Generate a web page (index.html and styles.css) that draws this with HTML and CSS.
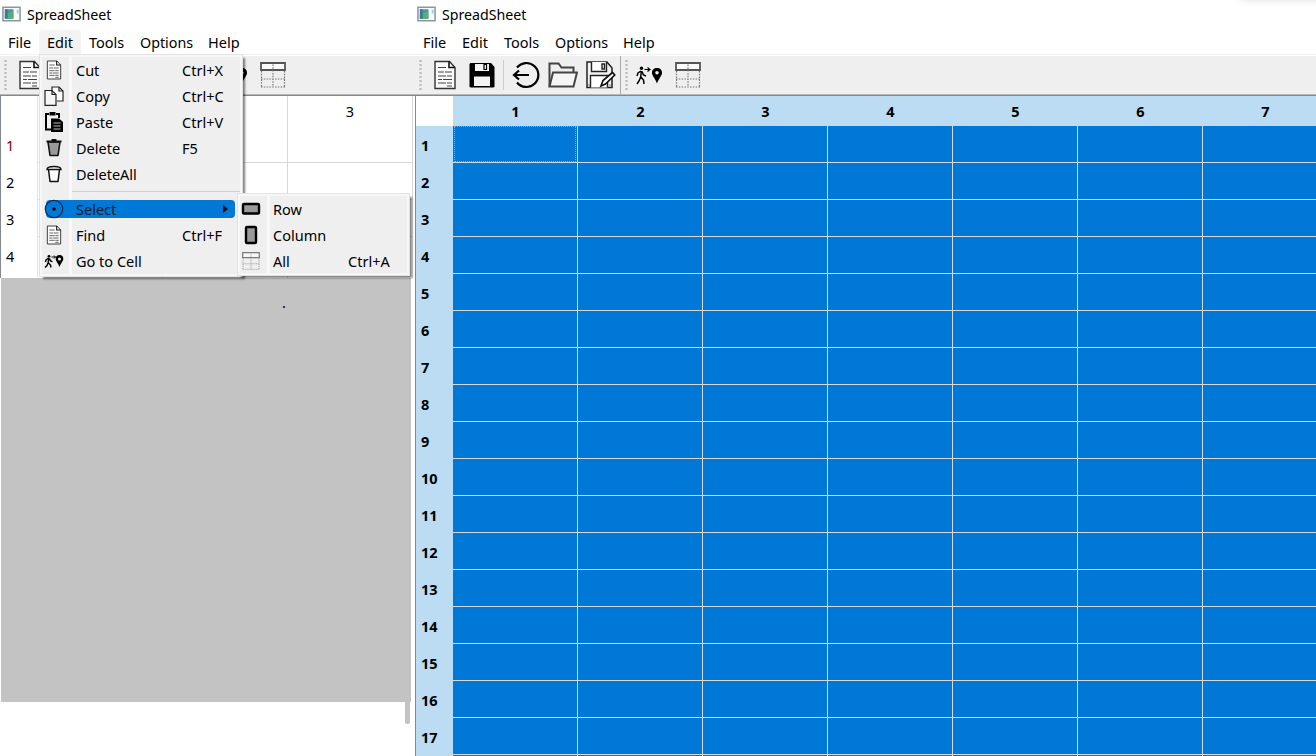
FILE: index.html
```html
<!DOCTYPE html>
<html lang="en">
<head>
<meta charset="utf-8">
<title>SpreadSheet</title>
<link rel="stylesheet" href="styles.css">
</head>
<body>
<svg class="sprite" aria-hidden="true">
  <symbol id="doc" viewBox="0 0 24 30"><path d="M2 1.500h14.500l5.500 6v21H2z" fill="#fafafa" stroke="#333" stroke-width="1.400"/><path d="M16 1.500v6h6" fill="none" stroke="#111" stroke-width="1.600"/><path d="M5 7.500h8M5 12h6m1 0h7M5 16h8m1 0h5M5 19.500h4m1 0h9M5 23h8m1 0h5M14 26h5" stroke="#444" stroke-width="1.200"/></symbol>
  <symbol id="copy" viewBox="0 0 20 20"><path d="M8 4V1h7l4 4v10h-6" fill="#fff" stroke="#222" stroke-width="1.200"/><path d="M1 4.500h7l4 4v10.800H1z" fill="#f6f6f6" stroke="#222" stroke-width="1.200"/><path d="M8 4.500v4h4M15 1v4h4" fill="none" stroke="#222" stroke-width="1.200"/></symbol>
  <symbol id="paste" viewBox="0 0 20 20"><path d="M5 2H2v15.500h5M12 2h3v4" fill="none" stroke="#000" stroke-width="2"/><path d="M5.500 0h6v3.500h-6zM7 6.500h8L19 10v10H7z"/><path d="M9.500 11h7M9.500 14h7M9.500 17h7" stroke="#bbb"/></symbol>
  <symbol id="trash" viewBox="0 0 18 20"><path d="M3 4h12l-2 13.500H5z" fill="#999" stroke="#111" stroke-width="1.600" stroke-linejoin="round"/><path d="M1.500 3.500h15M6.500 2h5" fill="none" stroke="#111" stroke-width="2"/></symbol>
  <symbol id="bin" viewBox="0 0 18 20"><path d="M3.500 5.500L5 17.500h8l1.500-12" fill="#fafafa" stroke="#111" stroke-width="1.500" stroke-linejoin="round"/><path d="M2 5.500h14C16 3 13 2.500 9 2.500S2 3 2 5.500z" fill="#fff" stroke="#111" stroke-width="1.400"/></symbol>
  <symbol id="target" viewBox="0 0 20 20"><circle cx="10" cy="10" r="8.700" fill="none" stroke="#102b4b" stroke-width="1.200"/><circle cx="10" cy="10" r="1.700"/></symbol>
  <symbol id="goto" viewBox="0 0 28 20"><circle cx="6.500" cy="3.300" r="1.700"/><path d="M6.500 6l-1 7M6 6L3 8l-1 3M7 6.500l1.500 3.500 2.500 1M6 12l2.500 3 .5 4M5.500 12.500L4 16l-2 3" fill="none" stroke="#000" stroke-width="1.500"/><path d="M9.500 4.500H15M12.500 2.500L15 4.500l-2.500 2" fill="none" stroke="#000" stroke-width="1.100"/><path fill-rule="evenodd" d="M22 3c-3 0-5 2-5 4.800C17 11 20 13 22 18.500 24 13 27 11 27 7.800 27 5 25 3 22 3zm0 3a1.800 1.800 0 1 1 0 3.600A1.800 1.800 0 0 1 22 6z"/></symbol>
  <symbol id="goto-small" viewBox="0 0 20 20"><circle cx="5" cy="5.300" r="1.400"/><path d="M5 7l-1 5M4.500 7L2 9l-.5 2M5.500 7.500l1 2.500 2 .7M4.500 12l2 2 .5 2.500M4 12l-1 2.500-2 2" fill="none" stroke="#000" stroke-width="1.400"/><path d="M7.500 6h4M10 4.500L11.500 6 10 7.500" fill="none" stroke="#000"/><path fill-rule="evenodd" d="M15.500 4C13 4 11.700 5.700 11.700 7.700c0 2.500 2.300 4 3.800 8.300 1.500-4.300 3.800-5.800 3.800-8.300C19.300 5.700 18 4 15.500 4zm0 2.400a1.500 1.500 0 1 1 0 3 1.500 1.500 0 0 1 0-3z"/></symbol>
  <symbol id="all" viewBox="0 0 26 26"><path d="M1 1h24v7H1z" fill="#fafafa" stroke="#555" stroke-width="1.800"/><path d="M13 2.500v23M1.500 9v16M24.500 9v16M1 17h24M1 25h24" fill="none" stroke="#777" stroke-width="1.200" stroke-dasharray="1.500 1.300"/></symbol>
  <symbol id="row" viewBox="0 0 20 20"><rect x="2" y="5" width="16" height="9.500" rx="1" fill="#999" stroke="#000" stroke-width="2.400"/></symbol>
  <symbol id="column" viewBox="0 0 20 20"><rect x="5" y="2" width="10" height="16" rx="1" fill="#999" stroke="#000" stroke-width="2.400"/></symbol>
  <symbol id="save" viewBox="0 0 26 26"><path d="M1.500 1H22l3.500 4v19.500l-1 1h-23l-1-1V2z"/><path d="M6 2h14v7H6zM5 14.500h16V24H5z" fill="#f4f4f4"/><path d="M15 2.500h2.500v5H15z" fill="#f4f4f4" stroke="#000" stroke-width="1.200"/></symbol>
  <symbol id="back" viewBox="0 0 28 28"><path d="M5 6.500a12 12 0 1 1 0 15" fill="none" stroke="#000" stroke-width="2.200"/><path d="M17 14H2M7 9.500L2 14l5 4.500" fill="none" stroke="#000" stroke-width="2.200"/></symbol>
  <symbol id="open" viewBox="0 0 30 26"><path d="M1.500 24.500V1.500h9l3 4h12v5" fill="#eee" stroke="#444" stroke-width="2"/><path d="M1.500 24.500L5 10.500h24l-3.500 14z" fill="#f5f5f5" stroke="#444" stroke-width="2"/></symbol>
  <symbol id="saveas" viewBox="0 0 30 28"><path d="M1 1h20l5 6v19.500H1z" fill="#f2f2f2" stroke="#222" stroke-width="1.500"/><path d="M5.500 1v9.500h15V1M16 3h2.500v5H16zM4.500 26.500v-12h17v12" fill="#fff" stroke="#222" stroke-width="1.400"/><path d="M15 25l2-5.500 9.500-8 2.200 2.500L19.500 23z" fill="#fff" stroke="#111" stroke-width="1.700"/><path d="M2.500 24h1M23.500 24h1" stroke="#111"/></symbol>
  <symbol id="app" viewBox="0 0 20 16"><path d="M1 1h18v14H1z" fill="#f9fbfa" stroke="#8b969d" stroke-width="1.600"/><path d="M3 3h9v10H3z" fill="#4695a0"/><path d="M3 9l9-5v9H3z" fill="#57ae73"/><path d="M3 3h3v10H3z" fill="#3f789f"/><path d="M15.500 3.500h2v4h-2z" fill="#9bd2dd"/></symbol>
</svg>
<main class="desktop">
  <section class="window window-left">
    <header class="titlebar"><svg class="app-icon"><use href="#app"/></svg><span class="title">SpreadSheet</span></header>
    <nav class="menubar"><span class="m-file">File</span><span class="m-edit active">Edit</span><span class="m-tools">Tools</span><span class="m-options">Options</span><span class="m-help">Help</span></nav>
    <div class="toolbar toolbar-left"><i class="grip"></i><svg class="tool-doc"><use href="#doc"/></svg><svg class="tool-goto"><use href="#goto"/></svg><svg class="tool-all"><use href="#all"/></svg></div>
    <div class="sheet sheet-left">
      <div class="side"><span>1</span><span>2</span><span>3</span><span>4</span></div>
      <div class="plain"><b></b><b></b><b>3</b><b></b><b></b><b></b><b></b><b></b><b></b><b></b><b></b><b></b></div>
    </div>
    <div class="empty">.</div>
    <div class="tail"></div>
    <div class="menu menu-edit">
      <div class="item"><svg><use href="#doc"/></svg><span>Cut</span><kbd>Ctrl+X</kbd></div>
      <div class="item"><svg><use href="#copy"/></svg><span>Copy</span><kbd>Ctrl+C</kbd></div>
      <div class="item"><svg><use href="#paste"/></svg><span>Paste</span><kbd>Ctrl+V</kbd></div>
      <div class="item"><svg><use href="#trash"/></svg><span>Delete</span><kbd>F5</kbd></div>
      <div class="item"><svg><use href="#bin"/></svg><span>DeleteAll</span></div>
      <hr>
      <div class="item selected"><svg><use href="#target"/></svg><span>Select</span><i class="arrow"></i></div>
      <div class="item"><svg><use href="#doc"/></svg><span>Find</span><kbd>Ctrl+F</kbd></div>
      <div class="item"><svg><use href="#goto-small"/></svg><span>Go to Cell</span></div>
    </div>
    <div class="menu menu-select">
      <div class="item"><svg><use href="#row"/></svg><span>Row</span></div>
      <div class="item"><svg><use href="#column"/></svg><span>Column</span></div>
      <div class="item faded"><svg><use href="#all"/></svg><span>All</span><kbd>Ctrl+A</kbd></div>
    </div>
  </section>
  <section class="window window-right">
    <header class="titlebar"><svg class="app-icon"><use href="#app"/></svg><span class="title">SpreadSheet</span></header>
    <nav class="menubar"><span class="m-file">File</span><span class="m-edit">Edit</span><span class="m-tools">Tools</span><span class="m-options">Options</span><span class="m-help">Help</span></nav>
    <div class="toolbar toolbar-right"><i class="grip"></i><svg class="tool-doc"><use href="#doc"/></svg><svg class="tool-save"><use href="#save"/></svg><i class="split"></i><svg class="tool-back"><use href="#back"/></svg><svg class="tool-open"><use href="#open"/></svg><svg class="tool-saveas"><use href="#saveas"/></svg><i class="edge"></i><i class="grip"></i><svg class="tool-goto"><use href="#goto"/></svg><svg class="tool-all"><use href="#all"/></svg></div>
    <div class="sheet sheet-right">
      <div class="columns" id="columns"></div>
      <div class="body"><div class="row-heads" id="rows"></div><div class="cells" id="cells"></div></div>
    </div>
  </section>
  <div class="shade"></div>
</main>
<script src="sheet.js"></script>
</body>
</html>
```
FILE: styles.css
```css
* { box-sizing: border-box; }
body { margin: 0; background: #fff; color: #000; font: 14.5px/20px "Noto Sans", "Open Sans", sans-serif; overflow: hidden; }
svg { display: block; flex: none; }
i { flex: none; }
.sprite { position: absolute; width: 0; height: 0; }
.desktop { position: relative; display: grid; grid-template-columns: 415px 901px; width: 1316px; height: 756px; overflow: hidden; }
.window { position: relative; height: 756px; overflow: hidden; display: flex; flex-direction: column; }
.shade { position: absolute; top: -10px; left: 1242px; width: 100px; height: 8px; box-shadow: 0 0 9px rgba(0,0,0,.22); }
.titlebar { height: 30px; display: flex; align-items: flex-start; padding: 5px 0 0 2px; flex: none; }
.app-icon { width: 19px; height: 16px; margin-top: 1px; }
.title { margin-left: 6px; font-size: 14.2px; white-space: nowrap; }
.menubar { height: 25px; border-bottom: 1px solid #f0f0f0; display: grid; grid-template-columns: 31px 42px 51px 68px 50px; padding-left: 8px; white-space: nowrap; flex: none; line-height: 25px; }
.menubar span + span { padding-left: 8px; }
.menubar .m-options { font-size: 14.3px; }
.menubar .active { background: #f3f3f3; border-radius: 3px 3px 0 0; }
.toolbar { height: 41px; display: flex; align-items: center; background: #efefef; border-bottom: 1px solid #828790; border-top: 1px solid #fff; padding: 0 0 2px 4px; box-shadow: inset 0 -1px #b9b9bc; flex: none; }
.grip { width: 3px; height: 32px; background: radial-gradient(circle, #bdbdbd 1px, transparent 1.4px) 0 0 / 3px 4px; }
.tool-doc { width: 24px; height: 30px; margin-left: 11px; }
.tool-goto { width: 28px; height: 20px; }
.tool-all { width: 26px; height: 26px; }
.toolbar-left .tool-goto { margin-left: 178px; }
.toolbar-left .tool-all { margin-left: 12px; }
.tool-save { width: 26px; height: 26px; margin-left: 12px; }
.split { width: 1px; height: 30px; margin-left: 8px; background: #ccc; }
.tool-back { width: 28px; height: 28px; margin-left: 8px; }
.tool-open { width: 30px; height: 26px; margin-left: 8px; }
.tool-saveas { width: 30px; height: 28px; margin-left: 8px; }
.edge { width: 1px; height: 38px; margin-left: 4px; background: #aaa; }
.edge + .grip { margin-left: 4px; }
.toolbar-right .tool-goto { margin-left: 7px; }
.toolbar-right .tool-all { margin-left: 12px; }
.sheet { display: flex; flex: none; }
.sheet-left { height: 182px; border-left: 1px solid #828790; }
.side { width: 37px; border-right: 1px solid #e5e5e5; padding: 31px 0 0 5px; display: grid; grid-template-rows: repeat(4, 37px); line-height: 37px; }
.side span:first-child { color: #71000b; }
.plain { display: grid; grid-template-columns: repeat(3, 125px); grid-template-rows: 67px 37px 37px 41px; width: 375px; }
.plain b { border-right: 1px solid #d8d8d8; border-bottom: 1px solid #d8d8d8; font-weight: 400; text-align: center; line-height: 30px; }
.plain b:nth-last-child(-n+3) { border-bottom: 0; }
.empty { width: 410px; height: 424px; flex: none; margin-left: 1px; background: #c3c3c3; padding: 14px 0 0 281px; }
.tail { width: 5px; height: 22px; margin-left: 405px; background: #c3c3c3; border-radius: 0 0 2px 2px; }
.menu { position: absolute; isolation: isolate; border: 1px solid #e2e2e2; outline: 2px solid #f7f7f7; outline-offset: -3px; box-shadow: 3px 3px 2px -1px rgba(0,0,0,.5); padding-top: 2px; }
.menu-edit { left: 39px; top: 54px; width: 204px; height: 223px; background: linear-gradient(90deg, #efefef 29px, #f8f8f8 29px, #f8f8f8 32px, #efefef 32px); }
.menu-select { left: 237px; top: 193px; width: 173px; height: 83px; background: linear-gradient(90deg, #efefef 29px, #f8f8f8 29px, #f8f8f8 32px, #efefef 32px); }
.item { height: 26px; display: flex; align-items: center; padding-left: 4px; white-space: nowrap; }
.item svg { width: 20px; height: 20px; }
.item span { margin-left: 12px; width: 106px; }
.item kbd { font: inherit; }
.menu-select .item { padding-left: 3px; }
.menu-select .item span { width: 75px; }
.faded svg { opacity: .75; width: 18px; height: 18px; margin: 0 1px; }
.menu hr { border: 0; border-top: 1px solid #d0d0d0; margin: 4px 2px 4px 32px; }
.selected { position: relative; }
.selected::before { content: ""; position: absolute; z-index: -1; left: 6px; top: 4px; width: 189px; height: 18px; background: #0078d7; border-radius: 4px; }
.selected span { color: #101c2c; }
.arrow { margin-left: 41px; border-left: 5px solid #111; border-top: 4px solid transparent; border-bottom: 4px solid transparent; }
.sheet-right { flex-direction: column; border-left: 1px solid #828790; height: 660px; overflow: hidden; }
.columns { height: 30px; display: grid; grid-template-columns: 37px repeat(7, 125px); background: #bbdcf2; text-align: center; line-height: 30px; font-weight: 700; flex: none; }
.corner { background: #fff; }
.body { display: grid; grid-template-columns: 37px 875px; }
.row-heads { background: #bbdcf2; padding-left: 5px; font-weight: 700; display: grid; grid-template-rows: repeat(18, 37px); line-height: 38px; }
.cells { display: grid; grid-template-columns: repeat(7, 125px); grid-template-rows: repeat(18, 37px); background: #0078d7; }
.cell { border-right: 1px solid #d8d8d8; border-bottom: 1px solid #d8d8d8; position: relative; }
.current::after { content: ""; position: absolute; inset: 0 1px 0 1px; border: 1px dotted #ff8728; }
```
FILE: sheet.js
```js
const columns = document.getElementById('columns');
const rows = document.getElementById('rows');
const cells = document.getElementById('cells');
function add(parent, className, text) {
  const element = document.createElement('div');
  element.className = className;
  element.textContent = text;
  parent.append(element);
}
add(columns, 'corner', '');
for (let column = 1; column <= 7; column++) add(columns, 'column-head', column);
for (let row = 1; row <= 18; row++) {
  if (row <= 17) add(rows, 'row-head', row);
  for (let column = 1; column <= 7; column++) add(cells, row === 1 && column === 1 ? 'cell current' : 'cell', '');
}
```
